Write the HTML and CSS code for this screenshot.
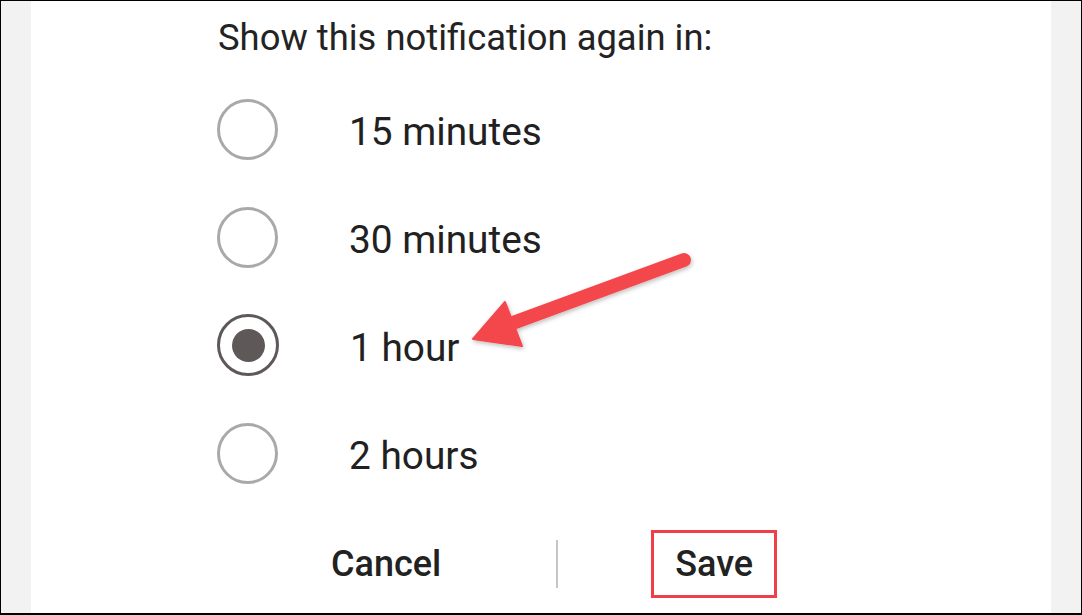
FILE: index.html
```html
<!DOCTYPE html>
<html lang="en">
<head>
<meta charset="utf-8">
<title>Snooze notification</title>
<link rel="stylesheet" href="styles.css">
</head>
<body>
<div class="frame">
  <div class="strip"></div>
  <main class="panel">
    <p class="title">Show this notification again in:</p>
    <ul class="options">
      <li class="option"><span class="radio"></span><span class="label">15 minutes</span></li>
      <li class="option"><span class="radio"></span><span class="label">30 minutes</span></li>
      <li class="option"><span class="radio radio-on"></span><span class="label">1 hour</span></li>
      <li class="option"><span class="radio"></span><span class="label">2 hours</span></li>
    </ul>
    <div class="actions">
      <span class="btn btn-cancel">Cancel</span>
      <span class="divider"></span>
      <span class="btn btn-save">Save</span>
    </div>
  </main>
  <div class="strip"></div>
  <svg class="arrow" width="1082" height="615" viewBox="0 0 1082 615" aria-hidden="true">
    <defs>
      <filter id="sh" x="-20%" y="-20%" width="140%" height="140%">
        <feDropShadow dx="1" dy="2" stdDeviation="2" flood-color="#000" flood-opacity="0.25"/>
      </filter>
    </defs>
    <g filter="url(#sh)" fill="#f4474c" stroke="#f4474c">
      <line x1="684" y1="260" x2="510" y2="324" stroke-width="14" stroke-linecap="round"/>
      <polygon points="473,339 505,302 522,346" stroke-width="2" stroke-linejoin="round"/>
    </g>
  </svg>
</div>
</body>
</html>
```
FILE: styles.css
```css
* { box-sizing: border-box; }
html, body { margin: 0; padding: 0; background: #fff; }
body {
  width: 1082px;
  height: 615px;
  overflow: hidden;
  font-family: Roboto, "Liberation Sans", sans-serif;
  color: #212121;
}
.frame {
  position: relative;
  width: 1082px;
  height: 615px;
  border: 1px solid #000;
  border-bottom-width: 2px;
  display: flex;
}
.strip {
  width: 30px;
  flex: none;
  background: #f2f2f2;
}
.panel {
  flex: 1;
  background: #fff;
  padding-left: 186px;
  padding-top: 16px;
}
.title {
  margin: 0;
  font-size: 36.4px;
  line-height: 42px;
  color: #232323;
  padding-left: 1px;
}
.options {
  list-style: none;
  margin: 16px 0 0;
  padding: 0;
}
.option {
  height: 108px;
  display: flex;
  align-items: center;
}
.radio {
  width: 61px;
  height: 61px;
  flex: none;
  border: 3px solid #a9a9a9;
  border-radius: 50%;
  display: flex;
  align-items: center;
  justify-content: center;
}
.radio-on {
  width: 62px;
  height: 62px;
  border-color: #5f5858;
}
.radio-on::after {
  content: "";
  width: 33px;
  height: 33px;
  border-radius: 50%;
  background: #5f5858;
}
.label {
  margin-left: 71px;
  padding-top: 4px;
  font-size: 38.8px;
  color: #212121;
}
.actions {
  display: flex;
  align-items: center;
  height: 106px;
  padding-top: 7px;
  padding-left: 114px;
}
.btn {
  font-size: 36px;
  font-weight: 500;
  color: #222;
}
.divider {
  width: 2px;
  height: 48px;
  background: #c6c6c6;
  margin-left: 115px;
  margin-right: 93px;
}
.btn-save {
  width: 126px;
  height: 68px;
  border: 3px solid #f03f48;
  display: flex;
  align-items: center;
  justify-content: center;
  padding-top: 1px;
}
.arrow {
  position: absolute;
  left: -1px;
  top: -1px;
  pointer-events: none;
}
```
